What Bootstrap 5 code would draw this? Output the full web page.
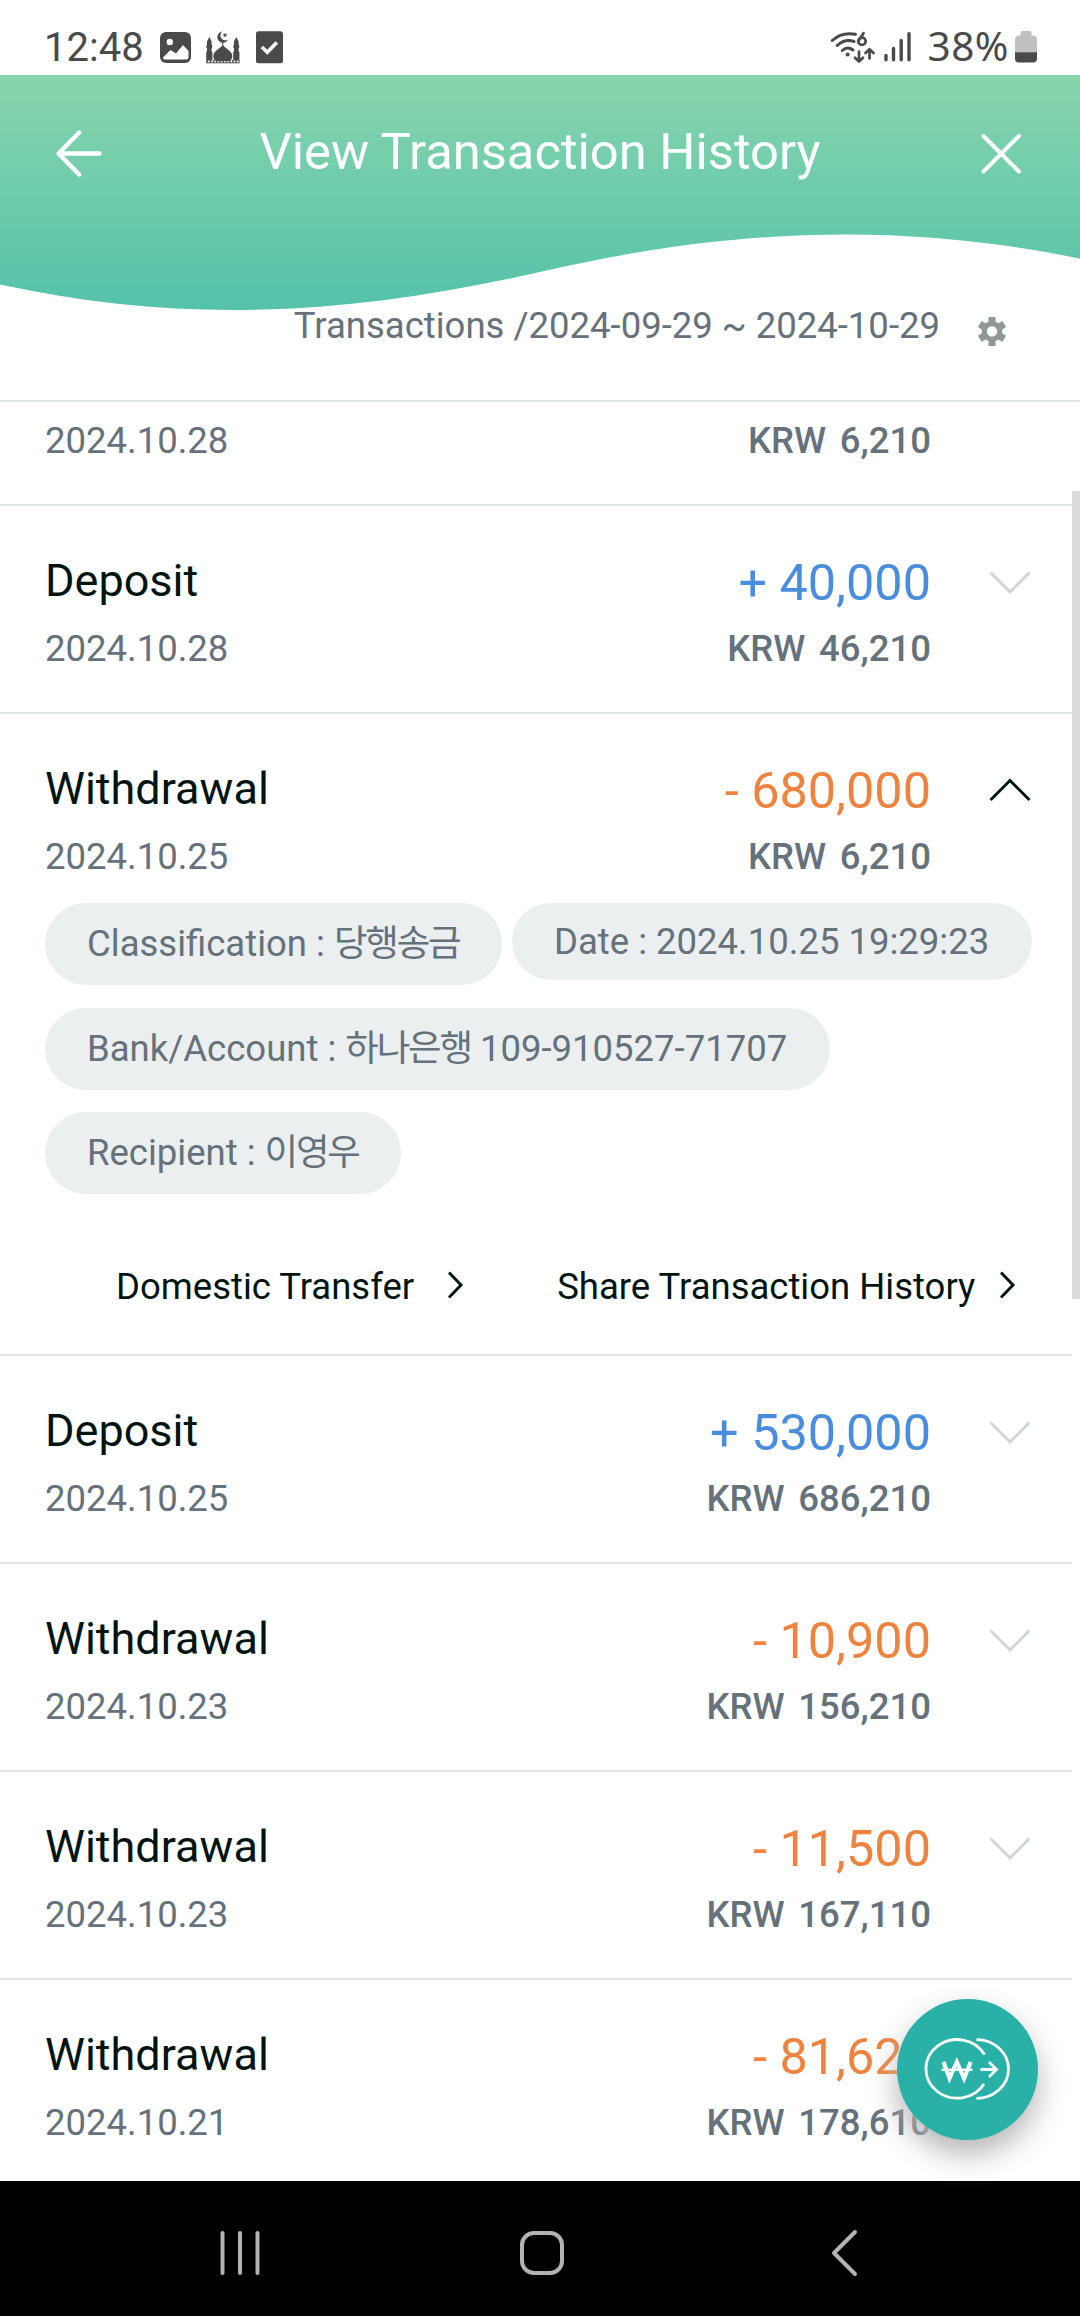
<!DOCTYPE html>
<html lang="en">
<head>
<meta charset="utf-8">
<meta name="viewport" content="width=device-width, initial-scale=1">
<title>View Transaction History</title>
<link href="https://cdn.jsdelivr.net/npm/bootstrap@5.3.0/dist/css/bootstrap.min.css" rel="stylesheet">
<style>
body{font-family:Roboto,"Noto Sans CJK KR",sans-serif;font-size:36.5px;color:#001512;background:#fff}
svg{display:block;flex:none}
.screen{width:1080px;height:2316px}
.statusbar{height:75px;padding:0 43px 0 44px;color:#4a4a4a;font-size:40px;line-height:48px}
.statusbar .clock{width:116px;padding-top:24px}
.statusbar .pct{font-family:"Noto Sans",sans-serif;font-size:40.5px;padding:22px 4px 0 0;letter-spacing:.5px;width:87px}
.app-header{height:236px;margin-bottom:-17px}
.wave{left:0;top:0;z-index:0}
.titlebar{height:156px;color:#fff;padding:0 58px 0 55px}
.titlebar h1{font-size:50.7px;line-height:60px;letter-spacing:0;padding:0 3px 2px 0}
.period{height:108px;border-bottom:2px solid #e0e6e6;color:#65717b;padding-right:74px;line-height:50px;padding-top:7px}
.listing{height:1779px}
.entry{width:1072px;border-bottom:2px solid #e0e6e6}
.entry-head{height:206px;padding:43px 0 0 45px}
.partial .entry-head{height:102px;padding-top:0}
.entry-open .entry-head{height:189px}
.kind{font-size:45px;line-height:64px}
.day{line-height:72px;color:#65717b}
.amount{font-size:50.4px;line-height:68px}
.balance{line-height:63px;color:#65717b;font-weight:500;word-spacing:4.7px}
.partial .day,.partial .balance{line-height:78px}
.in{color:#4a8ddc}.out{color:#ee8340}
.toggle{width:141px;padding:21px 0 0 58px}
.chips{padding-left:45px;gap:22.5px 10px}
.chip{height:82px;line-height:82px;padding:0 42.5px 0 42px;background:#ebeff0;border-radius:41px;color:#65717b;white-space:nowrap}
.chip.low{height:77px;line-height:78px}
.ko{letter-spacing:-2.2px}
.actions{padding:68px 0 0 116px;height:160px;line-height:50px}
.scroll-thumb{right:0;top:491px;width:8px;height:808px;background:#dcdcdc}
.fab{left:897px;top:1999px;width:141px;height:141px;background:#29b1a7;box-shadow:0 14px 30px #b4b4b4}
.navbar-sys{height:135px;background:#000;padding:9px 222px 0 220px}
.home-key{margin-right:7px}
</style>
</head>
<body>
<div class="screen position-relative overflow-hidden d-flex flex-column">
  <div class="statusbar d-flex">
    <div class="clock">12:48</div>
    <svg width="124" height="36" viewBox="160 30 124 36" style="margin-top:30px">
      <rect x="160" y="32" width="31" height="31" rx="6" fill="#4a4a4a"/>
      <circle cx="169.8" cy="42" r="3.2" fill="#fff"/>
      <path d="M163 57.500L170.500 50l5.500 3.500 7-8.500 5.500 6V57q0 2.500-2.500 2.500H165.500Q163 59.500 163 57.500Z" fill="#fff"/>
      <g fill="#4a4a4a">
        <path d="M222.500 31.500a5.600 5.600 0 1 0 5.500 8a4.600 4.600 0 1 1-5.500-8Z"/>
        <path d="M225 32.500l.7 1.700 1.800.1-1.400 1.200.5 1.700-1.600-1-1.500 1 .4-1.700-1.300-1.200 1.800-.1Z"/>
        <path d="M222.300 42h1v3.500c2 3 9 5.500 9 10.500 0 2.500-1.200 4.300-2.300 5h-14.400c-1.100-.7-2.300-2.500-2.300-5 0-5 7-7.500 9-10.500Z"/>
        <path d="M209.300 37l2.300 4.500v3l.6 1v2l-.6 1V51l.8 1v8.500h-6.200V52l.8-1v-2.500l-.6-1v-2l.6-1v-3Z"/>
        <path d="M236.300 37l2.300 4.500v3l.6 1v2l-.6 1V51l.8 1v8.500h-6.200V52l.8-1v-2.500l-.6-1v-2l.6-1v-3Z"/>
        <path d="M206 62.800H239.500" stroke="#4a4a4a" stroke-width="1"/>
        <path d="M206.500 61.300H239.500" stroke="#4a4a4a" stroke-width="2.600" stroke-dasharray="1.500 1.700"/>
        <rect x="256" y="31.300" width="27" height="32" rx="2.500"/>
      </g>
      <path d="M261.800 47l5.500 5.300 9.500-9.800" fill="none" stroke="#fff" stroke-width="3.600"/>
    </svg>
    <svg class="ms-auto" width="96" height="36" viewBox="830 30 96 36" style="margin-top:30px" fill="none" stroke="#4a4a4a" stroke-width="3" stroke-linecap="round">
      <path d="M832.300 40.500Q842 31.500 855.500 34.300"/>
      <path d="M837.200 45.500Q845 38.500 854 41.500"/>
      <path d="M842.300 50.500Q847.500 45.800 853 50"/>
      <circle cx="847.600" cy="54.500" r="2" fill="#4a4a4a" stroke="none"/>
      <path d="M863.500 33.200L858.800 40.500" stroke-width="2.800"/>
      <circle cx="862" cy="41.300" r="3.700" stroke-width="2.700"/>
      <path d="M859 51.500V61M855 57.800l4 3.800 4-3.800M869.500 58.500V49.500M865.500 53l4-3.800 4 3.800" stroke-width="2.700" stroke-linejoin="round"/>
      <path d="M886 55.500V59.700M893.500 48.500V59.700M901.200 40.500V59.700M909 33.800V59.700" stroke-width="3.400"/>
    </svg>
    <div class="pct text-end">38%</div>
    <svg width="22" height="32" viewBox="0 0 22 32" style="margin:31px 0 0 2px">
      <path d="M7 0h8q1.500 0 1.500 1.500V4.500H18q4 0 4 4V21.500H0V8.500q0-4 4-4H5.500V1.500Q5.500 0 7 0Z" fill="#c0c0c0"/>
      <path d="M0 21.300H22V27.500q0 4-4 4H4q-4 0-4-4Z" fill="#4a4a4a"/>
    </svg>
  </div>

  <header class="app-header position-relative">
    <svg class="wave position-absolute" width="1080" height="236" viewBox="0 75 1080 236">
      <defs><linearGradient id="sea" x1="0" y1="75" x2="0" y2="310" gradientUnits="userSpaceOnUse"><stop offset="0" stop-color="#88d5ad"/><stop offset="1" stop-color="#55c2aa"/></linearGradient></defs>
      <path d="M0 75H1080V258.700C1005 243 925 234.500 846 234.500C740 234.500 640 249 540 272C440 294.500 340 310 234 310C155 310 80 302 0 284.500Z" fill="url(#sea)"/>
    </svg>
    <div class="titlebar position-relative d-flex align-items-center justify-content-between">
      <svg width="48" height="50" viewBox="0 0 48 50" fill="none" stroke="#fff" stroke-width="4.400" stroke-linecap="round" stroke-linejoin="round"><path d="M44.500 25.500H3.500M24.200 4.500L3.500 25.500L24.200 46.500"/></svg>
      <h1 class="m-0 fw-normal">View Transaction History</h1>
      <svg width="42" height="44" viewBox="0 0 42 44" fill="none" stroke="#fff" stroke-width="4" stroke-linecap="round"><path d="M3.500 5L39 40.500M39 5L3.500 40.500"/></svg>
    </div>
  </header>

  <div class="period position-relative d-flex justify-content-end">
    <span>Transactions /2024-09-29 ~ 2024-10-29</span>
    <svg width="28" height="29" viewBox="0 0 28 29" style="margin:16px 0 0 38px"><path fill="#8f9a97" fill-rule="evenodd" d="M10.500 0h7v4.600l2.800 1.700 4.200-2.200 3.500 6-4 2.600v3.400l4 2.600-3.500 6-4.200-2.200-2.800 1.700V29h-7v-4.800l-2.800-1.700-4.200 2.200-3.500-6 4-2.600v-3.400l-4-2.600 3.500-6 4.200 2.200 2.800-1.700ZM14 9.200a5.200 5.200 0 1 0 .01 0Z"/></svg>
  </div>

  <main class="listing overflow-hidden">
    <section class="entry partial">
      <div class="entry-head d-flex"><div class="day me-auto">2024.10.28</div><div class="balance">KRW 6,210</div><div class="toggle"></div></div>
    </section>
    <section class="entry">
      <div class="entry-head d-flex">
        <div class="me-auto"><div class="kind">Deposit</div><div class="day">2024.10.28</div></div>
        <div class="text-end"><div class="amount in">+ 40,000</div><div class="balance">KRW 46,210</div></div>
        <div class="toggle"><svg width="42" height="26" fill="none" stroke="#d0d5d9" stroke-width="3"><path d="M1.500 2.500L21 22L40.500 2.500"/></svg></div>
      </div>
    </section>
    <section class="entry entry-open">
      <div class="entry-head d-flex">
        <div class="me-auto"><div class="kind">Withdrawal</div><div class="day">2024.10.25</div></div>
        <div class="text-end"><div class="amount out">- 680,000</div><div class="balance">KRW 6,210</div></div>
        <div class="toggle"><svg width="42" height="26" fill="none" stroke="#001512" stroke-width="3"><path d="M1.500 22L21 2.500L40.500 22"/></svg></div>
      </div>
      <div class="chips d-flex flex-wrap align-items-start">
        <div class="chip">Classification : <span class="ko">당행송금</span></div>
        <div class="chip low">Date : 2024.10.25 19:29:23</div>
        <div class="chip">Bank/Account : <span class="ko">하나은행</span> 109-910527-71707</div>
        <div class="w-100 d-flex"><div class="chip">Recipient : <span class="ko">이영우</span></div></div>
      </div>
      <div class="actions d-flex">
        <span>Domestic Transfer</span>
        <svg width="17" height="30" style="margin:8px 93px 0 33px" fill="none" stroke="#001512" stroke-width="3"><path d="M2 2.500L14 15L2 27.500"/></svg>
        <span>Share Transaction History</span>
        <svg width="17" height="30" style="margin:8px 0 0 24px" fill="none" stroke="#001512" stroke-width="3"><path d="M2 2.500L14 15L2 27.500"/></svg>
      </div>
    </section>
    <section class="entry">
      <div class="entry-head d-flex">
        <div class="me-auto"><div class="kind">Deposit</div><div class="day">2024.10.25</div></div>
        <div class="text-end"><div class="amount in">+ 530,000</div><div class="balance">KRW 686,210</div></div>
        <div class="toggle"><svg width="42" height="26" fill="none" stroke="#d0d5d9" stroke-width="3"><path d="M1.500 2.500L21 22L40.500 2.500"/></svg></div>
      </div>
    </section>
    <section class="entry">
      <div class="entry-head d-flex">
        <div class="me-auto"><div class="kind">Withdrawal</div><div class="day">2024.10.23</div></div>
        <div class="text-end"><div class="amount out">- 10,900</div><div class="balance">KRW 156,210</div></div>
        <div class="toggle"><svg width="42" height="26" fill="none" stroke="#d0d5d9" stroke-width="3"><path d="M1.500 2.500L21 22L40.500 2.500"/></svg></div>
      </div>
    </section>
    <section class="entry">
      <div class="entry-head d-flex">
        <div class="me-auto"><div class="kind">Withdrawal</div><div class="day">2024.10.23</div></div>
        <div class="text-end"><div class="amount out">- 11,500</div><div class="balance">KRW 167,110</div></div>
        <div class="toggle"><svg width="42" height="26" fill="none" stroke="#d0d5d9" stroke-width="3"><path d="M1.500 2.500L21 22L40.500 2.500"/></svg></div>
      </div>
    </section>
    <section class="entry">
      <div class="entry-head d-flex">
        <div class="me-auto"><div class="kind">Withdrawal</div><div class="day">2024.10.21</div></div>
        <div class="text-end"><div class="amount out">- 81,620</div><div class="balance">KRW 178,610</div></div>
        <div class="toggle"></div>
      </div>
    </section>
  </main>

  <div class="scroll-thumb position-absolute"></div>
  <button class="fab position-absolute border-0 rounded-circle p-0 d-flex align-items-center justify-content-center" aria-label="Transfer">
    <svg width="141" height="141" viewBox="897 1999 141 141" fill="none" stroke="#fff" stroke-width="2.800">
      <path d="M984.500 2054.500A31.300 29.300 0 1 0 984 2084"/>
      <path d="M976.500 2039.700A32 29.300 0 0 1 976.500 2098.300"/>
      <path d="M943.500 2062l6 16.500 7.300-16.500 7.300 16.500 6.500-16.500" stroke-width="4"/>
      <path d="M941.500 2069.800H972.500" stroke-width="2.400"/>
      <path d="M980.500 2069.500H996.500M989 2062l7.500 7.500-7.500 7.500"/>
    </svg>
  </button>

  <nav class="navbar-sys d-flex align-items-center justify-content-between">
    <svg width="40" height="46" fill="none" stroke="#b3b3b3" stroke-width="4" stroke-linecap="round"><path d="M2.500 3V43M20 3V43M37.500 3V43"/></svg>
    <svg class="home-key" width="46" height="46" fill="none" stroke="#b3b3b3" stroke-width="4"><rect x="3" y="3" width="40" height="40" rx="12"/></svg>
    <svg width="27" height="48" fill="none" stroke="#b3b3b3" stroke-width="4" stroke-linecap="round" stroke-linejoin="round"><path d="M24 3L3 24L24 45"/></svg>
  </nav>
</div>
<script src="https://cdn.jsdelivr.net/npm/bootstrap@5.3.0/dist/js/bootstrap.bundle.min.js"></script>
</body>
</html>
